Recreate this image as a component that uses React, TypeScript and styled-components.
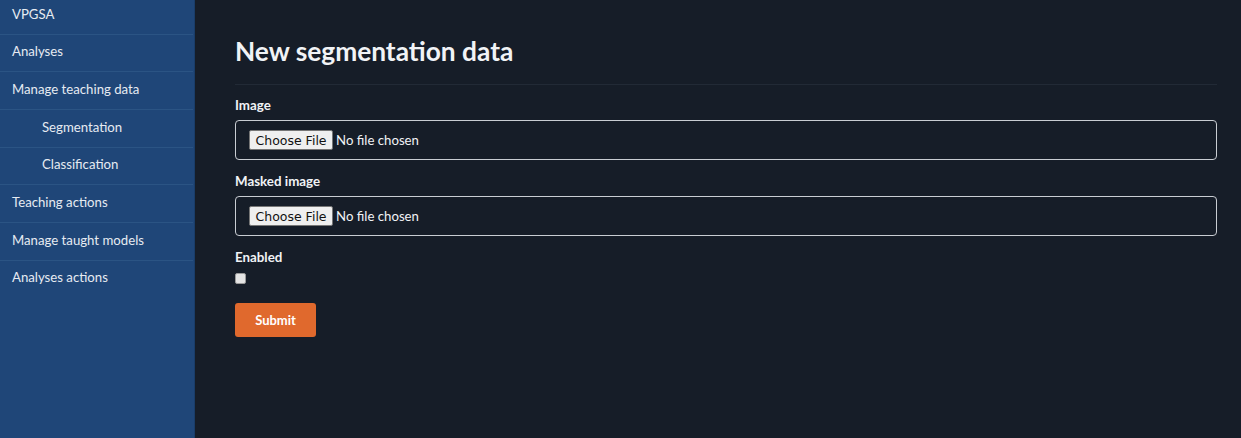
import React from "react";
import styled, { createGlobalStyle } from "styled-components";

const Global = createGlobalStyle`
  html, body { margin: 0; padding: 0; height: 100%; }
  body { background: #161d28; font-family: Lato, "Noto Sans", sans-serif; }
  #root { height: 100%; }
`;

const Layout = styled.div`
  display: flex;
  height: 438px;
  overflow: hidden;
`;

const Sidebar = styled.nav`
  width: 195px;
  flex: 0 0 195px;
  background: #1f4678;
  box-shadow: inset -1px 0 0 #1a3d69;
  display: flex;
  flex-direction: column;
`;

const NavItem = styled.a<{ $sub?: boolean; $brand?: boolean; $last?: boolean }>`
  display: block;
  color: #e6ebf2;
  font-size: 13.2px;
  line-height: 20.67px;
  padding: ${(p) => (p.$brand ? "4px 12px 9px" : "6.5px 12px 9.5px")};
  padding-left: ${(p) => (p.$sub ? "42px" : "12px")};
  border-bottom: 1px solid ${(p) => (p.$last ? "transparent" : "#2b5484")};
  margin-right: 2px;
  text-decoration: none;
  cursor: pointer;
`;

const Main = styled.main`
  flex: 1;
  padding: 0 24px 0 40px;
  color: #f1f3f6;
`;

const Title = styled.h1`
  font-size: 26.3px;
  font-weight: 700;
  margin: 35px 0 0;
  line-height: 32px;
  padding-bottom: 17px;
  border-bottom: 1px solid #222a36;
`;

const Form = styled.form`
  display: flex;
  flex-direction: column;
  padding-top: 12px;
`;

const Label = styled.label`
  font-size: 13.33px;
  font-weight: 700;
  line-height: 16px;
  margin-bottom: 7px;
`;

const FileBox = styled.div`
  height: 40px;
  box-sizing: border-box;
  border: 1px solid #c9cdd3;
  border-radius: 4px;
  display: flex;
  align-items: center;
  padding-left: 13px;
  margin-bottom: 13px;
`;

const FileInput = styled.input`
  color: #f1f3f6;
  font-family: Lato, "Noto Sans", sans-serif;
  font-size: 13.2px;
  &::file-selector-button {
    font-family: "DejaVu Sans", sans-serif;
    font-size: 12.5px;
    color: #111;
    background: #efefef;
    border: 1px solid #767676;
    border-radius: 2px;
    height: 20px;
    padding: 0 5.5px;
    margin-right: 3px;
  }
`;

const Check = styled.input`
  display: block;
  appearance: none;
  box-sizing: border-box;
  width: 11px;
  height: 11px;
  margin: 1px 0 19px 0;
  background: #e4e4e4;
  border: 1px solid #9a9a9a;
  border-radius: 2px;
`;

const Submit = styled.button`
  width: 81px;
  height: 34px;
  background: #e0692d;
  border: none;
  border-radius: 3px;
  color: #fff;
  font-family: Lato, "Noto Sans", sans-serif;
  font-weight: 700;
  font-size: 13px;
  cursor: pointer;
`;

const Actions = styled.div`
  display: flex;
`;

export default function App() {
  return (
    <>
      <Global />
      <Layout>
        <Sidebar>
          <NavItem $brand>VPGSA</NavItem>
          <NavItem>Analyses</NavItem>
          <NavItem>Manage teaching data</NavItem>
          <NavItem $sub>Segmentation</NavItem>
          <NavItem $sub>Classification</NavItem>
          <NavItem>Teaching actions</NavItem>
          <NavItem>Manage taught models</NavItem>
          <NavItem $last>Analyses actions</NavItem>
        </Sidebar>
        <Main>
          <Title>New segmentation data</Title>
          <Form onSubmit={(e) => e.preventDefault()}>
            <Label>Image</Label>
            <FileBox>
              <FileInput type="file" />
            </FileBox>
            <Label>Masked image</Label>
            <FileBox>
              <FileInput type="file" />
            </FileBox>
            <Label>Enabled</Label>
            <Check type="checkbox" />
            <Actions>
              <Submit type="submit">Submit</Submit>
            </Actions>
          </Form>
        </Main>
      </Layout>
    </>
  );
}
